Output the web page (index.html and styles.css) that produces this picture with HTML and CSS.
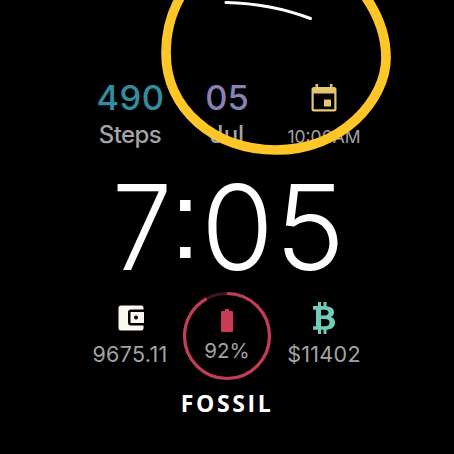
FILE: index.html
```html
<!DOCTYPE html>
<html lang="en">
<head>
<meta charset="utf-8">
<title>Watch face</title>
<link rel="stylesheet" href="styles.css">
</head>
<body>
<main class="watch">
  <section class="row top">
    <div class="cell">
      <div class="value teal">490</div>
      <div class="label steps">Steps</div>
    </div>
    <div class="cell">
      <div class="value violet">05</div>
      <div class="label month">Jul</div>
    </div>
    <div class="cell">
      <div class="value">
        <svg class="icon calendar" viewBox="0 0 26 28"><path fill="#e6c770" fill-rule="evenodd" d="M4.500 0h2.600v3h11.800V0h2.600v3H23q2.500 0 2.500 2.500V25q0 2.500-2.500 2.500H3Q.5 27.500.5 25V5.500Q.5 3 3 3h1.500ZM2.700 9.500v15.800h20.600V9.500ZM13 15.500h7V22.500H13Z"/></svg>
      </div>
      <div class="label event">10:00AM</div>
    </div>
  </section>
  <div class="time"><span class="hour">7</span><span class="colon">:</span><span class="tens">0</span><span class="ones">5</span></div>
  <section class="row bottom">
    <div class="cell">
      <svg class="icon wallet" viewBox="0 0 26 26"><path fill="#fbf7f1" fill-rule="evenodd" d="M3 .5h20q2.500 0 2.500 2.500v1.500H13q-3 0-3 3v10q0 3 3 3h12.500V23q0 2.500-2.500 2.500H3Q.5 25.500.5 23V3Q.5.500 3 .5ZM12.500 7H26v11H12.500ZM18 10.500a2 2 0 1 0 .01 0Z"/></svg>
      <div class="amount wallet-amount">9675.11</div>
    </div>
    <div class="cell battery">
      <svg class="ring" viewBox="0 0 90 90"><circle cx="45" cy="45" r="42.500" fill="none" stroke="#42141f" stroke-width="3"/><circle cx="45" cy="45" r="42.500" fill="none" stroke="#c33d57" stroke-width="3.200" pathLength="100" stroke-dasharray="92 8" transform="rotate(-90 45 45)"/></svg>
      <svg class="icon cell-icon" viewBox="0 0 12 24"><path fill="#cb3b55" d="M4 0h4v2h3q1 0 1 1v19q0 1-1 1H1q-1 0-1-1V3q0-1 1-1h3Z"/></svg>
      <div class="percent">92%</div>
    </div>
    <div class="cell">
      <svg class="icon bitcoin" viewBox="0 0 24 32"><path fill="#6fcdb9" fill-rule="evenodd" d="M6 0h3v4h2.500V0h3v4.200c5 .4 7.500 2.600 7.500 6 0 2.400-1.200 4-3.200 4.800 2.900.8 4.200 2.900 4.200 5.500 0 4.300-3 6.800-8.500 7.200V32h-3v-4.200H9V32H6v-4.200H1v-3.600h3V7.800H1V4h5ZM9 7.800v5.700h3.500c2.600 0 4-1 4-2.900s-1.300-2.800-4-2.800ZM9 17v7.200h4c3 0 4.500-1.200 4.500-3.600S16 17 13 17Z"/></svg>
      <div class="amount coin-amount">$11402</div>
    </div>
  </section>
  <div class="brand">FOSSIL</div>
  <svg class="marker" viewBox="0 0 454 454"><path fill="none" stroke="#ffc627" stroke-width="9.700" d="M181-4C168 18 166 39 166 53C166 109 214 150 276 150C343 150 386 99 386 58C386 37 379 16 365-4"/><path fill="none" stroke="#fff" stroke-width="3" stroke-linecap="round" d="M226 2.500Q271 3.500 310.500 18.500"/></svg>
</main>
</body>
</html>
```
FILE: styles.css
```css
body {
  margin: 0;
  background: #000;
}

.watch {
  position: relative;
  width: 454px;
  height: 454px;
  overflow: hidden;
  background: #000;
  color: #a3a3a3;
  font-family: Inter, "Liberation Sans", sans-serif;
  white-space: nowrap;
}

.row {
  display: grid;
  grid-template-columns: repeat(3, 97px);
  justify-content: center;
}

.top {
  padding-top: 78px;
  height: 74px;
}

.cell {
  display: flex;
  flex-direction: column;
  align-items: center;
}

.icon {
  display: block;
  flex: none;
}

.value {
  height: 40px;
  line-height: 39px;
  font-size: 34.5px;
  font-weight: 500;
}

.teal {
  color: #318ea0;
  letter-spacing: 0.4px;
  padding-left: 1px;
}

.violet { color: #8a80b8; }

.label {
  height: 34px;
  line-height: 34px;
  font-size: 24px;
}

.steps {
  font-weight: 500;
  letter-spacing: -0.6px;
}

.month { font-weight: 500; }

.event {
  line-height: 37px;
  font-size: 17.5px;
}

.calendar {
  width: 26px;
  height: 28px;
  margin: 6px 1px 0 0;
}

.time {
  display: flex;
  height: 138px;
  padding-left: 112px;
  line-height: 151px;
  color: #fff;
  font-size: 118px;
  font-weight: 350;
}

.hour {
  width: 58px;
  transform: scaleX(0.91);
  transform-origin: left;
}

.colon {
  width: 31px;
  line-height: 135px;
  font-family: "Liberation Sans", sans-serif;
  font-size: 110px;
  font-weight: 400;
}

.tens { width: 74px; }

.bottom {
  height: 92px;
}

.wallet {
  width: 26px;
  height: 26px;
  margin: 15px 0 0 2px;
}

.amount {
  line-height: 30px;
  font-size: 21.5px;
  letter-spacing: 0.3px;
}

.wallet-amount { margin-top: 8px; }

.battery {
  position: relative;
}

.ring {
  position: absolute;
  top: 1px;
  left: 3px;
  width: 90px;
  height: 90px;
}

.cell-icon {
  width: 12px;
  height: 24px;
  margin-top: 19px;
}

.percent {
  margin-top: 3px;
  line-height: 30px;
  font-size: 20.5px;
}

.bitcoin {
  width: 24px;
  height: 32px;
  margin-top: 12px;
}

.coin-amount { margin-top: 5px; }

.brand {
  height: 32px;
  margin-top: 6px;
  color: #fff;
  font: 700 23px/31px "Open Sans", sans-serif;
  letter-spacing: 2.6px;
  text-align: center;
}

.marker {
  position: absolute;
  inset: 0;
  width: 454px;
  height: 454px;
}
```
